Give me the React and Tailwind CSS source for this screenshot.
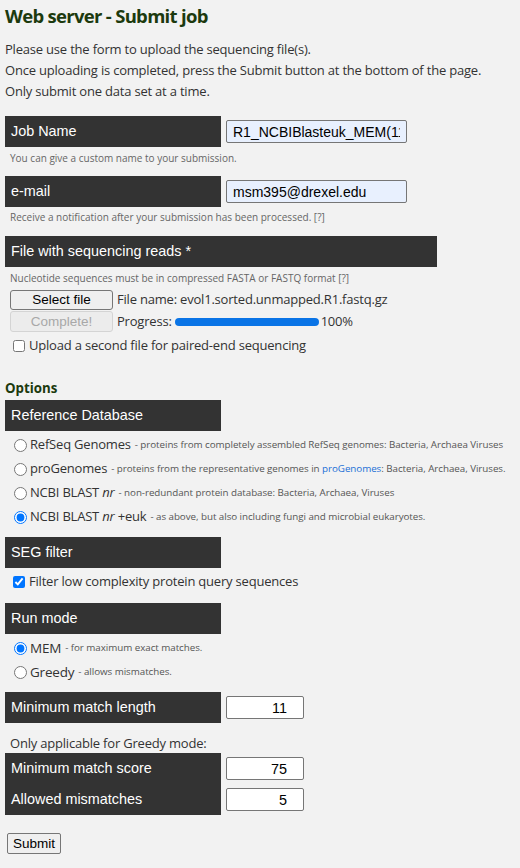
import React from "react";

const sans = "font-['Open_Sans',sans-serif]";
const arial = "font-['Liberation_Sans',Arial,sans-serif]";
const body = "text-[13px] tracking-[-0.2px]";

function Bar({ children, wide }) {
  return (
    <div
      className={`${arial} flex h-[31px] shrink-0 items-center bg-[#333333] pl-[6px] text-[14.4px] text-white ${
        wide ? "w-[432px]" : "w-[216px]"
      }`}
    >
      {children}
    </div>
  );
}

function TextField({ value }) {
  return (
    <input
      readOnly
      defaultValue={value}
      className={`${arial} ml-[5px] h-[23px] w-[181px] rounded-[2px] border border-[#767676] bg-[#e8f0fe] px-[6px] text-[14px] text-black outline-none`}
    />
  );
}

function NumberField({ value }) {
  return (
    <input
      readOnly
      defaultValue={value}
      className={`${arial} ml-[5px] h-[23px] w-[78px] rounded-[2px] border border-[#767676] bg-white pr-[16px] text-right text-[14.4px] text-black outline-none`}
    />
  );
}

function Hint({ children, className = "" }) {
  return (
    <div className={`${sans} pl-[5px] text-[10px] leading-[14px] text-[#666] ${className}`}>
      {children}
    </div>
  );
}

function Radio({ checked, name, children }) {
  return (
    <label className={`${sans} flex h-[24px] items-center whitespace-nowrap text-[#333]`}>
      <input
        type="radio"
        name={name}
        defaultChecked={checked}
        className="ml-[9px] mr-[3px] h-[13px] w-[13px] shrink-0"
      />
      {children}
    </label>
  );
}

function Small({ children }) {
  return <span className="ml-[4px] text-[9.8px] tracking-[-0.05px] text-[#555]">{children}</span>;
}

export default function App() {
  return (
    <div className={`${sans} min-h-[868px] bg-[#f2f2f2] px-[5px] text-[#333]`}>
      <h1 className="pt-[1px] text-[18.5px] font-bold leading-[30px] tracking-[-0.7px] text-[#1c3a0e]">
        Web server - Submit job
      </h1>

      <div className={`mt-[8px] leading-[21px] ${body}`}>
        <p>Please use the form to upload the sequencing file(s).</p>
        <p>Once uploading is completed, press the Submit button at the bottom of the page.</p>
        <p>Only submit one data set at a time.</p>
      </div>

      <div className="mt-[14px] flex items-center">
        <Bar>Job Name</Bar>
        <TextField value="R1_NCBIBlasteuk_MEM(11)" />
      </div>
      <Hint className="mt-[4px]">You can give a custom name to your submission.</Hint>

      <div className="mt-[11px] flex items-center">
        <Bar>e-mail</Bar>
        <TextField value="msm395@drexel.edu" />
      </div>
      <Hint className="mt-[3px]">
        Receive a notification after your submission has been processed. [?]
      </Hint>

      <div className="mt-[12px]">
        <Bar wide>File with sequencing reads *</Bar>
      </div>
      <Hint className="mt-[4px]">Nucleotide sequences must be in compressed FASTA or FASTQ format [?]</Hint>

      <div className="mt-[5px] flex flex-col pl-[5px]">
        <div className="flex h-[20px] items-center">
          <button
            className={`${arial} h-[20px] w-[103px] rounded-[3px] border border-[#767676] bg-[#efefef] text-[13.5px] leading-none text-black`}
          >
            Select file
          </button>
          <span className={`ml-[4px] ${body}`}>File name: evol1.sorted.unmapped.R1.fastq.gz</span>
        </div>
        <div className="mt-[1px] flex h-[21px] items-center">
          <button
            disabled
            className={`${arial} h-[21px] w-[103px] rounded-[3px] border border-[#d4d4d4] bg-[#ececec] text-[13.5px] leading-none text-[#a8a8a8]`}
          >
            Complete!
          </button>
          <span className={`ml-[4px] ${body}`}>Progress:</span>
          <div className="ml-[3px] h-[8px] w-[144px] rounded-full bg-[#0a74e6]" />
          <span className={`ml-[2px] ${body}`}>100%</span>
        </div>
      </div>

      <label className={`mt-[4px] flex h-[20px] items-center ${body}`}>
        <input type="checkbox" className="ml-[8px] mr-[4px] h-[12px] w-[12px]" />
        Upload a second file for paired-end sequencing
      </label>

      <div className="mt-[22px] text-[13.3px] font-bold leading-[20px] text-[#1c3a0e]">Options</div>

      <div className="mt-[2px]">
        <Bar>Reference Database</Bar>
      </div>
      <div className={`mt-[2px] ${body}`}>
        <Radio name="db">
          <span className="text-[13px]">RefSeq Genomes</span>
          <Small>- proteins from completely assembled RefSeq genomes: Bacteria, Archaea Viruses</Small>
        </Radio>
        <Radio name="db">
          <span className="text-[13px]">proGenomes</span>
          <Small>
            - proteins from the representative genomes in{" "}
            <span className="text-[#1a6fd6]">proGenomes</span>: Bacteria, Archaea, Viruses.
          </Small>
        </Radio>
        <Radio name="db">
          <span>
            NCBI BLAST <i>nr</i>
          </span>
          <Small>- non-redundant protein database: Bacteria, Archaea, Viruses</Small>
        </Radio>
        <Radio name="db" checked>
          <span>
            NCBI BLAST <i>nr</i> +euk
          </span>
          <Small>- as above, but also including fungi and microbial eukaryotes.</Small>
        </Radio>
      </div>

      <div className="mt-[8px]">
        <Bar>SEG filter</Bar>
      </div>
      <label className={`mt-[3px] flex h-[22px] items-center ${body}`}>
        <input type="checkbox" defaultChecked className="ml-[8px] mr-[4px] h-[12px] w-[12px]" />
        Filter low complexity protein query sequences
      </label>

      <div className="mt-[10px]">
        <Bar>Run mode</Bar>
      </div>
      <div className={`mt-[2px] ${body}`}>
        <Radio name="mode" checked>
          <span className="text-[13.5px]">MEM</span>
          <Small>- for maximum exact matches.</Small>
        </Radio>
        <Radio name="mode">
          <span className="text-[13.5px]">Greedy</span>
          <Small>- allows mismatches.</Small>
        </Radio>
      </div>

      <div className="mt-[8px] flex items-center">
        <Bar>Minimum match length</Bar>
        <NumberField value="11" />
      </div>

      <div className={`mt-[10px] pl-[5px] leading-[20px] ${body}`}>Only applicable for Greedy mode:</div>

      <div className="flex">
        <div className={`${arial} w-[216px] bg-[#333333] pl-[6px] text-[14.4px] text-white`}>
          <div className="flex h-[31px] items-center">Minimum match score</div>
          <div className="flex h-[31px] items-center">Allowed mismatches</div>
        </div>
        <div className="flex flex-col">
          <div className="flex h-[31px] items-center">
            <NumberField value="75" />
          </div>
          <div className="flex h-[31px] items-center">
            <NumberField value="5" />
          </div>
        </div>
      </div>

      <button
        className={`${arial} mt-[18px] ml-[2px] h-[21px] w-[54px] rounded-[2px] border border-[#767676] bg-[#efefef] text-[13.5px] leading-none text-black`}
      >
        Submit
      </button>
    </div>
  );
}
